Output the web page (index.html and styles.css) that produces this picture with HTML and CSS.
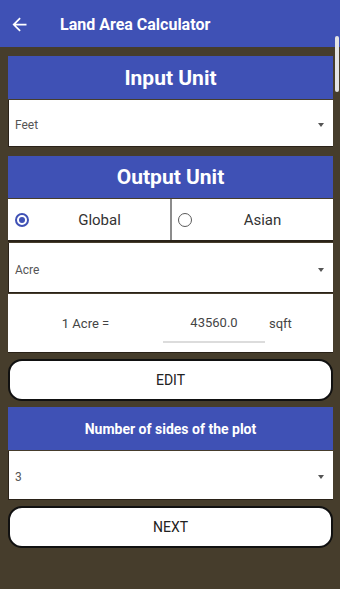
FILE: index.html
```html
<!DOCTYPE html>
<html>
<head>
<meta charset="utf-8">
<link rel="stylesheet" href="styles.css">
</head>
<body>
<div class="appbar">
  <svg class="back" viewBox="0 0 24 24" width="21" height="21"><path d="M20 11H7.83l5.59-5.59L12 4l-8 8 8 8 1.41-1.41L7.83 13H20v-2z" fill="#fff"/></svg>
  <span class="title">Land Area Calculator</span>
</div>
<div class="scrollthumb"></div>
<div class="content">
  <div class="group">
    <div class="header big h43">Input Unit</div>
    <div class="spinner h47"><span>Feet</span><i class="caret"></i></div>
  </div>
  <div class="group">
    <div class="header big h42">Output Unit</div>
    <div class="radios">
      <div class="radio-cell left"><span class="radio on"></span><span class="rlabel">Global</span></div>
      <div class="radio-cell"><span class="radio"></span><span class="rlabel">Asian</span></div>
    </div>
    <div class="spinner h50"><span>Acre</span><i class="caret"></i></div>
    <div class="convert">
      <span class="clabel">1 Acre =</span>
      <span class="cfield">43560.0</span>
      <span class="cunit">sqft</span>
    </div>
  </div>
  <div class="btn">EDIT</div>
  <div class="group">
    <div class="header small h43">Number of sides of the plot</div>
    <div class="spinner h49"><span>3</span><i class="caret"></i></div>
  </div>
  <div class="btn">NEXT</div>
</div>
</body>
</html>
```
FILE: styles.css
```css
html, body {
  margin: 0;
  padding: 0;
}
body {
  width: 340px;
  height: 589px;
  background: #463d2c;
  font-family: Roboto, "Noto Sans", "Liberation Sans", sans-serif;
  overflow: hidden;
  position: relative;
}
.appbar {
  height: 47px;
  background: #3f51b5;
  display: flex;
  align-items: center;
  color: #fff;
}
.back {
  margin-left: 9px;
  margin-top: 1px;
}
.title {
  margin-left: 30px;
  font-weight: bold;
  font-size: 16px;
  margin-top: 2px;
}
.scrollthumb {
  position: absolute;
  right: 1px;
  top: 36px;
  width: 4px;
  height: 56px;
  background: #e4e4e4;
  border-radius: 2px;
}
.content {
  padding: 9px 7px 0 8px;
  display: flex;
  flex-direction: column;
}
.group {
  display: flex;
  flex-direction: column;
  gap: 1px;
}
.group + .btn, .btn + .group {
  margin-top: 6px;
}
.group + .group {
  margin-top: 9px;
}
.header {
  background: #3f51b5;
  color: #fff;
  font-weight: bold;
  display: flex;
  align-items: center;
  justify-content: center;
}
.header.big { font-size: 21px; }
.header.small { font-size: 14px; }
.h43 { height: 43px; }
.h42 { height: 42px; }
.h47 { height: 47px; }
.h49 { height: 49px; }
.h50 { height: 50px; }
.spinner {
  background: #fff;
  border-left: 1px solid #2a2218;
  border-bottom: 1px solid #2a2218;
  box-sizing: border-box;
  display: flex;
  align-items: center;
  padding: 4px 9px 0 6px;
  font-size: 12px;
  color: #555;
}
.spinner span { flex: 1; }
.caret {
  width: 0;
  height: 0;
  border-left: 3.5px solid transparent;
  border-right: 3.5px solid transparent;
  border-top: 4px solid #555;
}
.radios {
  display: flex;
  height: 41px;
  border-bottom: 2px solid #2a2218;
}
.radio-cell {
  flex: 1;
  background: #fff;
  display: flex;
  align-items: center;
  padding-left: 6px;
}
.radio-cell.left {
  padding-left: 7px;
  border-right: 2px solid #8c8c8c;
}
.radio {
  width: 14px;
  height: 14px;
  box-sizing: border-box;
  border: 1.5px solid #5a5a5a;
  border-radius: 50%;
  display: flex;
  align-items: center;
  justify-content: center;
}
.radio.on {
  border: 2px solid #3f51b5;
}
.radio.on::after {
  content: "";
  width: 6px;
  height: 6px;
  border-radius: 50%;
  background: #3f51b5;
}
.rlabel {
  flex: 1;
  text-align: center;
  font-size: 15px;
  color: #333;
}
.convert {
  height: 59px;
  background: #fff;
  display: flex;
  align-items: center;
  font-size: 13px;
  color: #444;
  border-bottom: 1px solid #2a2218;
  box-sizing: border-box;
}
.clabel {
  width: 155px;
  text-align: center;
}
.cfield {
  width: 102px;
  text-align: center;
  line-height: 16px;
  padding-bottom: 10px;
  margin-top: 12px;
  border-bottom: 2px solid #dcdcdc;
}
.cunit {
  padding-left: 4px;
}
.btn {
  height: 42px;
  box-sizing: border-box;
  background: #fff;
  border: 2px solid #111;
  border-radius: 14px;
  display: flex;
  align-items: center;
  justify-content: center;
  font-size: 14px;
  font-weight: normal;
  color: #222;
}
```
